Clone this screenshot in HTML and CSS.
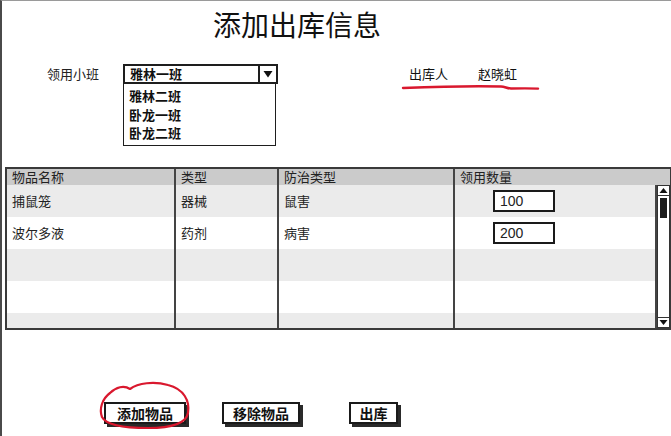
FILE: index.html
```html
<!DOCTYPE html>
<html lang="zh-CN">
<head>
<meta charset="utf-8">
<title>添加出库信息</title>
<link rel="stylesheet" href="styles.css">
</head>
<body>
<div class="frame">
  <h1 class="title">添加出库信息</h1>

  <div class="form">
    <div class="label">领用小班</div>
    <div class="select-group">
      <div class="select">
        <span class="select-value">雅林一班</span>
        <span class="select-arrow"><svg width="10" height="8" viewBox="0 0 10 8"><path d="M0.5 1 L9.5 1 L5 7.5 Z" fill="#111"/></svg></span>
      </div>
      <div class="list">
        <div class="list-item">雅林二班</div>
        <div class="list-item">卧龙一班</div>
        <div class="list-item">卧龙二班</div>
      </div>
    </div>
    <div class="operator">
      <span class="op-label">出库人</span>
      <span class="op-name">赵晓虹</span>
    </div>
  </div>

  <div class="grid">
    <div class="head">
      <div class="cell">物品名称</div>
      <div class="cell">类型</div>
      <div class="cell">防治类型</div>
      <div class="cell last">领用数量</div>
    </div>
    <div class="body">
      <div class="rows">
        <div class="row alt">
          <div class="cell">捕鼠笼</div>
          <div class="cell">器械</div>
          <div class="cell">鼠害</div>
          <div class="cell last"><span class="qty">100</span></div>
        </div>
        <div class="row">
          <div class="cell">波尔多液</div>
          <div class="cell">药剂</div>
          <div class="cell">病害</div>
          <div class="cell last"><span class="qty">200</span></div>
        </div>
        <div class="row alt">
          <div class="cell"></div><div class="cell"></div><div class="cell"></div><div class="cell last"></div>
        </div>
        <div class="row">
          <div class="cell"></div><div class="cell"></div><div class="cell"></div><div class="cell last"></div>
        </div>
        <div class="row alt">
          <div class="cell"></div><div class="cell"></div><div class="cell"></div><div class="cell last"></div>
        </div>
      </div>
      <div class="scrollbar">
        <div class="sb-btn"><svg width="9" height="7" viewBox="0 0 9 7"><path d="M0.5 6 L8.5 6 L4.5 1 Z" fill="#111"/></svg></div>
        <div class="sb-track"><div class="sb-thumb"></div></div>
        <div class="sb-btn"><svg width="9" height="7" viewBox="0 0 9 7"><path d="M0.5 1 L8.5 1 L4.5 6 Z" fill="#111"/></svg></div>
      </div>
    </div>
  </div>

  <div class="actions">
    <button class="btn btn-add">添加物品</button>
    <button class="btn btn-remove">移除物品</button>
    <button class="btn btn-out">出库</button>
  </div>

  <svg class="mark-line" width="140" height="10" viewBox="0 0 140 10">
    <path d="M2 5 C40 3.5 80 3 100 3.5 C104 3.6 106 5.5 110 5.5 C120 5.4 130 5.3 137 5.6" fill="none" stroke="#d9182e" stroke-width="2.4" stroke-linecap="round"/>
  </svg>
  <svg class="mark-circle" width="100" height="52" viewBox="0 0 100 52">
    <path d="M14 14 C6 20 3 30 6 38 C10 46 30 49 52 49 C74 49 90 45 92 34 C94 22 88 10 72 6 C58 2 42 4 34 10 C28 6 20 8 14 14 Z" fill="none" stroke="#d9182e" stroke-width="2.2" stroke-linejoin="round"/>
  </svg>
</div>
</body>
</html>
```
FILE: styles.css
```css
* { box-sizing: border-box; }

html, body {
  margin: 0;
  padding: 0;
  background: #fff;
}

body {
  width: 671px;
  height: 436px;
  overflow: hidden;
  font-family: "Noto Sans CJK SC", "Liberation Sans", sans-serif;
  color: #111;
}

.frame {
  position: relative;
  width: 671px;
  height: 436px;
  border-left: 2px solid #4a4a4a;
  border-top: 1px solid #9a9a9a;
}

.title {
  margin: 9px 0 0 0;
  padding-left: 211px;
  font-size: 28px;
  line-height: 28px;
  font-weight: 400;
  color: #111;
}

.form {
  display: flex;
  align-items: flex-start;
  margin-top: 26px;
  padding-left: 45px;
  font-size: 13px;
}

.label {
  width: 76px;
  line-height: 20px;
  color: #222;
}

.select-group {
  width: 155px;
}

.select {
  display: flex;
  height: 20px;
  border: 2px solid #1e1e1e;
  background: #fff;
}

.select-value {
  flex: 1;
  padding-left: 5px;
  line-height: 16px;
  font-weight: 700;
}

.select-arrow {
  width: 18px;
  border-left: 2px solid #1e1e1e;
  display: flex;
  align-items: center;
  justify-content: center;
}

.list {
  width: 153px;
  height: 62px;
  border: 1.5px solid #1e1e1e;
  border-top: none;
  padding: 3px 0 0 5px;
  background: #fff;
}

.list-item {
  line-height: 18.5px;
  font-weight: 700;
}

.operator {
  display: flex;
  margin-left: 131px;
  line-height: 20px;
  color: #111;
}

.op-name {
  margin-left: 30px;
}

.grid {
  margin: 21px 0 0 3px;
  width: 666px;
  border: 2px solid #3a3a3a;
  border-right-width: 1px;
  font-size: 13px;
}

.head {
  display: grid;
  grid-template-columns: 169px 103px 176px 1fr;
  height: 16px;
  background: #cbcbcb;
  line-height: 16px;
}

.head .cell {
  padding-left: 5px;
  border-right: 2px solid #444;
  color: #222;
}

.cell.last {
  border-right: none;
}

.body {
  display: flex;
  height: 143px;
}

.rows {
  flex: 1;
  overflow: hidden;
}

.row {
  display: grid;
  grid-template-columns: 169px 103px 176px 1fr;
  height: 32px;
  background: #fff;
}

.row.alt {
  background: #ebebeb;
}

.row .cell {
  padding-left: 5px;
  line-height: 32px;
  border-right: 2px solid #444;
  color: #222;
}

.row .cell.last {
  padding-left: 38px;
  display: flex;
  align-items: center;
}

.qty {
  display: block;
  width: 62px;
  height: 22px;
  border: 2px solid #1a1a1a;
  background: #fff;
  padding-left: 5px;
  font-family: "Liberation Sans", "Noto Sans", sans-serif;
  font-size: 14px;
  line-height: 18px;
}

.scrollbar {
  width: 13px;
  display: flex;
  flex-direction: column;
  border: 1px solid #333;
  background: #fff;
}

.sb-btn {
  height: 10px;
  display: flex;
  align-items: center;
  justify-content: center;
  border-bottom: 1px solid #333;
}

.sb-btn:last-child {
  border-bottom: none;
  border-top: 1px solid #333;
}

.sb-track {
  flex: 1;
  padding: 2px 2px 0 2px;
}

.sb-thumb {
  height: 20px;
  background: #1c1c1c;
}

.actions {
  display: flex;
  margin-top: 72px;
  padding-left: 102px;
}

.btn {
  height: 22px;
  padding: 0;
  border: 2px solid #1a1a1a;
  background: #fff;
  box-shadow: 3px 3px 0 #2a2a2a;
  font-family: "Noto Sans CJK SC", sans-serif;
  font-size: 14px;
  font-weight: 700;
  line-height: 18px;
  color: #111;
}

.btn-add { width: 82px; }
.btn-remove { width: 78px; margin-left: 36px; }
.btn-out { width: 49px; margin-left: 49px; }

.mark-line {
  position: absolute;
  left: 399px;
  top: 82px;
}

.mark-circle {
  position: absolute;
  left: 94px;
  top: 378px;
}
```
